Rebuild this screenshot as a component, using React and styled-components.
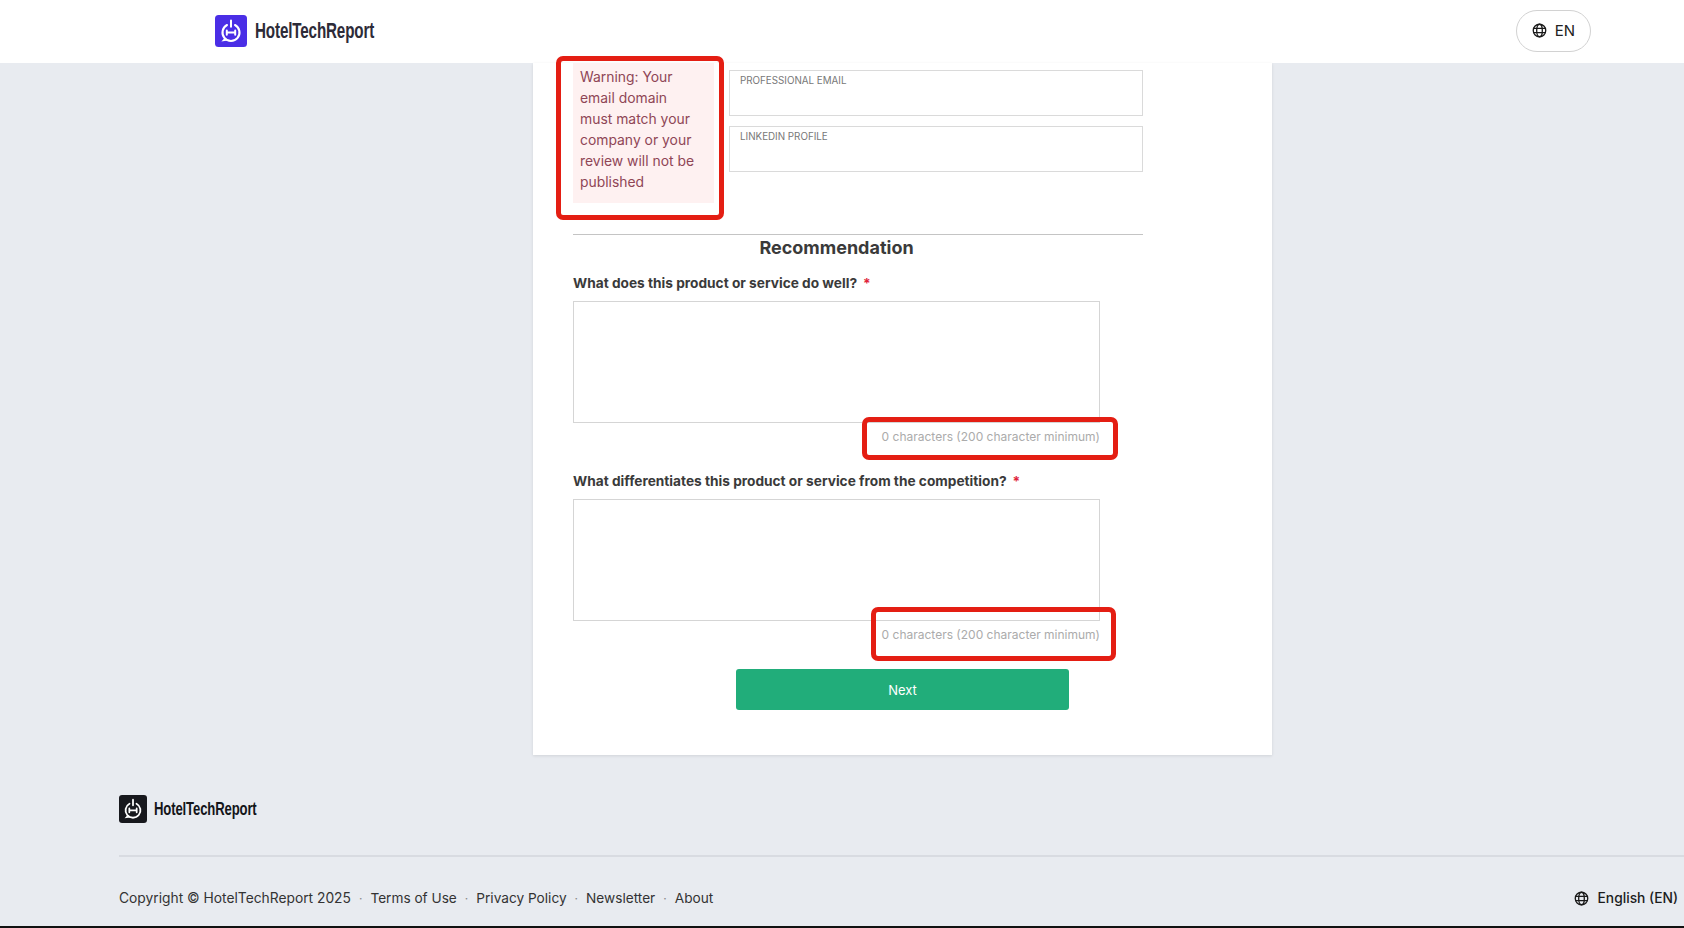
import React from "react";
import styled, { createGlobalStyle } from "styled-components";

const GlobalStyle = createGlobalStyle`
  html, body {
    margin: 0;
    padding: 0;
    height: 928px;
    overflow: hidden;
    background: #e8ebf0;
    font-family: Inter, "Noto Sans", sans-serif;
  }
  * {
    box-sizing: border-box;
  }
`;

const Page = styled.div`
  display: flex;
  flex-direction: column;
  height: 928px;
`;

const Header = styled.header`
  flex: none;
  height: 63px;
  background: #fff;
  display: flex;
  align-items: center;
  justify-content: space-between;
  padding: 0 93px 2px 215px;
`;

const Brand = styled.div`
  display: flex;
  align-items: center;
  gap: ${(p) => (p.$small ? "7px" : "8px")};
`;

// no condensed family is installed, so the wordmark is squeezed sideways
const BrandName = styled.span`
  display: inline-block;
  font-family: "Liberation Sans", sans-serif;
  font-weight: 700;
  font-size: ${(p) => (p.$small ? "19px" : "22px")};
  letter-spacing: -0.2px;
  color: ${(p) => (p.$small ? "#14151a" : "#2d2b38")};
  transform: scaleX(0.69);
  transform-origin: left center;
`;

const LangPill = styled.button`
  width: 75px;
  height: 42px;
  border: 1px solid #d2d2d2;
  border-radius: 21px;
  background: #fff;
  display: flex;
  align-items: center;
  justify-content: center;
  gap: 8px;
  font-family: inherit;
  font-size: 15px;
  color: #222;
`;

const Card = styled.main`
  flex: none;
  width: 739px;
  height: 692px;
  margin-left: 533px;
  padding: 7px 129px 0 40px;
  background: #fff;
  box-shadow: 0 1px 3px rgba(0, 0, 0, 0.1);
`;

const TopRow = styled.div`
  display: flex;
  gap: 15px;
  height: 164px;
`;

const Warning = styled.div`
  position: relative;
  flex: none;
  width: 141px;
  height: 140px;
  margin-top: -7px;
  padding: 4px 16px 0 7px;
  background: #fef1f1;
  color: #8f4656;
  font-size: 13.9px;
  line-height: 21px;
`;

const Callout = styled.span`
  position: absolute;
  top: ${(p) => p.$top}px;
  right: ${(p) => p.$right}px;
  bottom: ${(p) => p.$bottom}px;
  left: ${(p) => p.$left}px;
  border: 5px solid #e41e13;
  border-radius: 7px;
  pointer-events: none;
`;

const ContactFields = styled.div`
  flex: 1;
  display: flex;
  flex-direction: column;
  gap: 10px;
`;

const Field = styled.div`
  height: 46px;
  padding: 3px 10px;
  border: 1px solid #dadada;
  font-size: 9.8px;
  line-height: 13px;
  color: #777;
`;

const Divider = styled.hr`
  margin: 0;
  border: 0;
  border-top: 1px solid #c4c4c4;
`;

const SectionTitle = styled.h2`
  width: 527px;
  margin: 1px 0 14px;
  text-align: center;
  font-size: 18px;
  line-height: 24px;
  font-weight: 700;
  color: #3a3a3a;
`;

const Question = styled.label`
  display: block;
  margin-top: 1px;
  font-size: 13.7px;
  line-height: 18px;
  font-weight: 700;
  color: #3a3a3a;
`;

const Required = styled.span`
  margin-left: 6px;
  color: #e0243a;
`;

const Answer = styled.div`
  width: 527px;
  height: 122px;
  margin-top: 9px;
  border: 1px solid #d5d5d5;
`;

const Counter = styled.div`
  position: relative;
  width: 527px;
  height: 30px;
  margin-bottom: 19px;
  padding-top: 6px;
  text-align: right;
  font-size: 12px;
  line-height: 16px;
  color: #ababab;
`;

const Actions = styled.div`
  display: flex;
  margin-top: -1px;
  padding-left: 163px;
`;

const NextButton = styled.button`
  flex: none;
  width: 333px;
  height: 41px;
  border: 0;
  border-radius: 3px;
  background: #21ad7a;
  color: #fff;
  font-family: inherit;
  font-size: 13px;
`;

const Footer = styled.footer`
  flex: 1;
  display: flex;
  flex-direction: column;
  padding: 40px 0 0 119px;
`;

const FooterRule = styled.div`
  height: 2px;
  margin-top: 32px;
  background: #d8dbe1;
`;

const FooterBar = styled.div`
  flex: 1;
  display: flex;
  align-items: center;
  justify-content: space-between;
  padding: 13px 6px 0 0;
  font-size: 13.8px;
  color: #333;
`;

const FooterLinks = styled.div`
  display: flex;
  align-items: center;
`;

const FooterLink = styled.span`
  font-size: 13.65px;
`;

const Dot = styled.span`
  width: 19.5px;
  text-align: center;
  color: #888;
  font-size: 12px;
`;

const Language = styled.div`
  display: flex;
  align-items: center;
  gap: 9px;
  font-weight: 500;
  color: #1c1c1c;
`;

const BottomEdge = styled.div`
  flex: none;
  height: 2px;
  background: #111;
`;

function LogoMark({ size, bg }) {
  return (
    <svg width={size} height={size} viewBox="0 0 32 32" aria-hidden="true">
      <rect width="32" height="32" rx="3.5" fill={bg} />
      <path
        d="M20 10A8.5 8.5 0 1 1 12 10"
        fill="none"
        stroke="#fff"
        strokeWidth="2.1"
        strokeLinecap="round"
      />
      <path d="M10 22.5L6.4 26.6L13 25.6Z" fill="#fff" />
      <path
        d="M16 5.4v6.4M11.8 15.4v4.4M20.2 15.4v4.4M11.8 17.6h8.4"
        fill="none"
        stroke="#fff"
        strokeWidth="2"
        strokeLinecap="round"
      />
    </svg>
  );
}

function Globe({ size }) {
  return (
    <svg width={size} height={size} viewBox="0 0 24 24" fill="none" stroke="#1a1a1a" strokeWidth="2.1" aria-hidden="true">
      <circle cx="12" cy="12" r="10" />
      <ellipse cx="12" cy="12" rx="4.5" ry="10" />
      <path d="M2.6 8.5h18.8M2.6 15.5h18.8" />
    </svg>
  );
}

export default function App() {
  const links = ["Terms of Use", "Privacy Policy", "Newsletter", "About"];
  return (
    <Page>
      <GlobalStyle />
      <Header>
        <Brand>
          <LogoMark size={32} bg="#4a2ee6" />
          <BrandName>HotelTechReport</BrandName>
        </Brand>
        <LangPill>
          <Globe size={15} />
          EN
        </LangPill>
      </Header>

      <Card>
        <TopRow>
          <Warning>
            Warning: Your email domain must match your company or your review will not be published
            <Callout $top={-7} $right={-10} $bottom={-17} $left={-17} />
          </Warning>
          <ContactFields>
            <Field>PROFESSIONAL EMAIL</Field>
            <Field>LINKEDIN PROFILE</Field>
          </ContactFields>
        </TopRow>
        <Divider />
        <SectionTitle>Recommendation</SectionTitle>

        <Question>
          What does this product or service do well?<Required>*</Required>
        </Question>
        <Answer />
        <Counter>
          0 characters (200 character minimum)
          <Callout $top={-6} $right={-18} $bottom={-7} $left={289} />
        </Counter>

        <Question>
          What differentiates this product or service from the competition?<Required>*</Required>
        </Question>
        <Answer />
        <Counter>
          0 characters (200 character minimum)
          <Callout $top={-14} $right={-16} $bottom={-10} $left={298} />
        </Counter>

        <Actions>
          <NextButton>Next</NextButton>
        </Actions>
      </Card>

      <Footer>
        <Brand $small>
          <LogoMark size={28} bg="#17181d" />
          <BrandName $small>HotelTechReport</BrandName>
        </Brand>
        <FooterRule />
        <FooterBar>
          <FooterLinks>
            <span>Copyright © HotelTechReport 2025</span>
            {links.map((link) => (
              <React.Fragment key={link}>
                <Dot>·</Dot>
                <FooterLink>{link}</FooterLink>
              </React.Fragment>
            ))}
          </FooterLinks>
          <Language>
            <Globe size={15} />
            English (EN)
          </Language>
        </FooterBar>
      </Footer>
      <BottomEdge />
    </Page>
  );
}
